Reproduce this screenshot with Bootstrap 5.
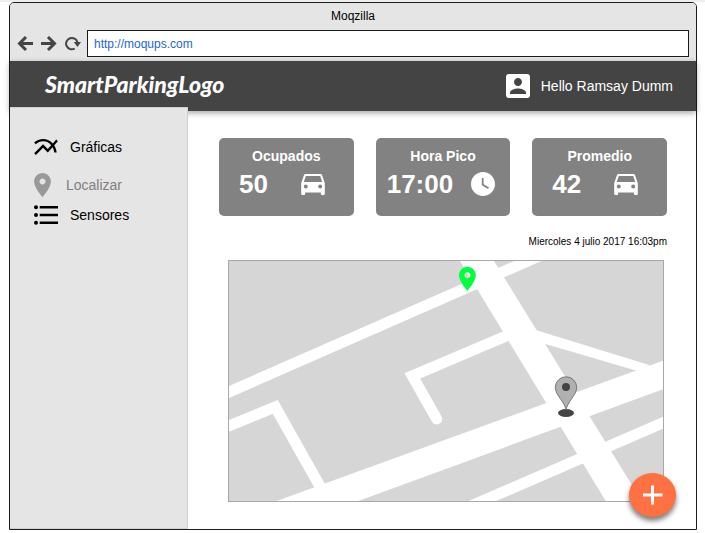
<!DOCTYPE html>
<html lang="es">
<head>
<meta charset="utf-8">
<meta name="viewport" content="width=device-width, initial-scale=1">
<title>Moqzilla</title>
<link href="https://cdn.jsdelivr.net/npm/bootstrap@5.3.0/dist/css/bootstrap.min.css" rel="stylesheet">
<style>
body { font-family: "Liberation Sans", Arial, sans-serif; font-size: 14px; line-height: 18px; color: #000; background: #fff; border-top: 2px solid #eee; }
svg { display: block; flex: none; }
.browser { margin: 0 8px 0 9px; border: 1px solid #1c1c1c; border-radius: 5px 5px 0 0; }
.chrome { background: #e5e5e5; border-radius: 4px 4px 0 0; padding: 4px 7px; }
.chrome-title { font-size: 12px; margin-bottom: 5px; }
.chrome-buttons { gap: 7px; margin-right: 6px; }
.chrome-btn { border: 0; background: none; padding: 0; color: #444; }
.address { height: 27px; border: 1px solid #1c1c1c; background: #fff; color: #1a66dd; font-size: 12px; padding: 0 6px; min-width: 0; }
.topbar { background: #444; color: #fff; min-height: 50px; padding: 0 23px 0 35px; box-shadow: 0 2px 6px rgba(0,0,0,.35); }
.logo { font-family: Lato, "Liberation Sans", sans-serif; font-weight: 900; font-style: italic; font-size: 23px; line-height: 26px; padding-bottom: 4px; color: #fff; text-decoration: none; }
.user { gap: 11px; }
.side { width: 178px; flex: none; margin-top: -4px; background: #e5e5e5; border: solid #d0d0d0; border-width: 1px 1px 1px 0; padding: 24px 0 0 24px; }
.side a { height: 30px; gap: 12px; color: #000; text-decoration: none; }
.side a.current { gap: 15px; margin-top: 8px; color: #808080; }
.side a.current svg { color: #999; }
.content { padding: 27px 29px 27px 31px; min-width: 0; }
.stats { gap: 22px; }
.stat { flex: 1 1 0; background: #828282; color: #fff; border-radius: 5px; padding: 9px 0 13px; }
.stat h2 { font-size: 14px; line-height: 18px; font-weight: 700; margin: 0; text-align: center; }
.stat-body { font-size: 26px; line-height: 38px; font-weight: 700; padding: 0 29px 0 20px; }
.stat-body.wide { padding: 0 15px 0 11px; }
.stamp { font-size: 10px; line-height: 16px; margin: 18px 0 10px; text-align: right; }
.map-box { margin: 0 3px 0 9px; border: 1px solid #a8a8a8; background: #d6d6d6; }
.map-box > svg { width: 100%; height: auto; }
.fab { right: -13px; bottom: -16px; width: 47px; height: 44px; border: 0; border-radius: 50%; background: #ff7143; box-shadow: 0 4px 5px rgba(0,0,0,.5); padding: 0; }
</style>
</head>
<body>
<svg width="0" height="0" class="position-absolute" aria-hidden="true">
  <symbol id="car" viewBox="3 5 18 16"><path d="M18.92 6.01C18.72 5.42 18.16 5 17.5 5h-11c-.66 0-1.21.42-1.42 1.01L3 12v8c0 .55.45 1 1 1h1c.55 0 1-.45 1-1v-1h12v1c0 .55.45 1 1 1h1c.55 0 1-.45 1-1v-8l-2.08-5.99zM6.5 16c-.83 0-1.5-.67-1.5-1.5S5.67 13 6.5 13s1.5.67 1.5 1.5S7.33 16 6.5 16zm11 0c-.83 0-1.5-.67-1.5-1.5s.67-1.5 1.5-1.5 1.5.67 1.5 1.5-.67 1.5-1.5 1.5zM5 11l1.5-4.5h11L19 11H5z"/></symbol>
</svg>
<div class="browser">
  <div class="chrome">
    <div class="chrome-title text-center">Moqzilla</div>
    <div class="d-flex align-items-center">
      <div class="chrome-buttons d-flex align-items-center">
        <button class="chrome-btn" type="button" aria-label="Atrás"><svg width="17" height="16" viewBox="0 0 17 16" fill="none" stroke="currentColor" stroke-width="3"><path d="M16 7.500H3M9 1L2.500 7.500L9 14"/></svg></button>
        <button class="chrome-btn" type="button" aria-label="Adelante"><svg width="17" height="16" viewBox="0 0 17 16" fill="none" stroke="currentColor" stroke-width="3"><path d="M0 7.500H13M7 1L13.500 7.500L7 14"/></svg></button>
        <button class="chrome-btn" type="button" aria-label="Recargar"><svg width="16" height="16" viewBox="0 0 16 16"><path d="M9.800 12.500A5.700 5.700 0 1 1 12.400 6.500" fill="none" stroke="currentColor" stroke-width="2"/><path d="M8.800 6H16L12.500 11Z" fill="currentColor"/></svg></button>
      </div>
      <input class="address flex-fill" type="text" value="http://moqups.com" aria-label="Dirección">
    </div>
  </div>
  <header class="topbar d-flex align-items-center justify-content-between position-relative">
    <a class="logo" href="#">SmartParkingLogo</a>
    <div class="user d-flex align-items-center">
      <svg width="24" height="24" viewBox="3 3 18 18" fill="#fff"><path d="M3 5v14c0 1.100.89 2 2 2h14c1.100 0 2-.9 2-2V5c0-1.100-.9-2-2-2H5c-1.110 0-2 .9-2 2zm12 4c0 1.660-1.340 3-3 3s-3-1.340-3-3 1.340-3 3-3 3 1.340 3 3zm-9 8c0-2 4-3.100 6-3.100s6 1.100 6 3.100v1H6v-1z"/></svg>
      <span>Hello Ramsay Dumm</span>
    </div>
  </header>
  <div class="d-flex">
    <nav class="side position-relative" aria-label="Principal">
      <a class="d-flex align-items-center" href="#"><svg width="24" height="16" viewBox="2 5 20 13.500"><path d="M22 6.920l-1.410-1.410-2.850 3.210C15.680 6.400 12.830 5 9.610 5 6.720 5 4.070 6.160 2 8l1.420 1.420C5.120 7.930 7.270 7 9.610 7c2.740 0 5.090 1.260 6.770 3.240l-2.880 3.240-4-4L2 16.990l1.500 1.500 6-6.010 4 4 4.050-4.550c.75 1.350 1.250 2.900 1.440 4.550H21c-.22-2.300-.95-4.390-2.040-6.140L22 6.920z"/></svg>Gráficas</a>
      <a class="current d-flex align-items-center" href="#" aria-current="page"><svg width="17" height="24" viewBox="5 2 14 20" fill="currentColor"><path id="pin" d="M12 2C8.130 2 5 5.130 5 9c0 5.250 7 13 7 13s7-7.750 7-13c0-3.870-3.130-7-7-7zm0 9.500c-1.380 0-2.500-1.120-2.500-2.500s1.120-2.500 2.500-2.500 2.500 1.120 2.500 2.500-1.120 2.500-2.500 2.500z"/></svg>Localizar</a>
      <a class="d-flex align-items-center" href="#"><svg width="24" height="20" viewBox="0 0 24 20"><circle cx="2" cy="2.300" r="2"/><circle cx="2" cy="10" r="2"/><circle cx="2" cy="17.700" r="2"/><path d="M5.700 1.100H24v2.400H5.700zM5.700 8.800H24v2.400H5.700zM5.700 16.500H24v2.400H5.700z"/></svg>Sensores</a>
    </nav>
    <main class="content flex-fill">
      <div class="stats d-flex">
        <section class="stat">
          <h2>Ocupados</h2>
          <div class="stat-body d-flex align-items-center justify-content-between">50<svg width="24" height="21" fill="#fff"><use href="#car"/></svg></div>
        </section>
        <section class="stat">
          <h2>Hora Pico</h2>
          <div class="stat-body wide d-flex align-items-center justify-content-between">17:00<svg width="24" height="24" viewBox="2 2 20 20" fill="#fff"><path d="M12 2C6.500 2 2 6.500 2 12s4.500 10 10 10 10-4.500 10-10S17.500 2 12 2zm4.200 14.200L11 13V7h1.500v5.200l4.500 2.700-.8 1.300z"/></svg></div>
        </section>
        <section class="stat">
          <h2>Promedio</h2>
          <div class="stat-body d-flex align-items-center justify-content-between">42<svg width="24" height="21" fill="#fff"><use href="#car"/></svg></div>
        </section>
      </div>
      <p class="stamp">Miercoles 4 julio 2017 16:03pm</p>
      <div class="map-box position-relative">
        <svg viewBox="0 0 434 240" role="img" aria-label="Mapa">
          <g fill="none" stroke="#fff" stroke-width="11">
            <path d="M-20 139.800L330 -13.700"/>
            <path d="M-20 173L46.300 146L97 236"/>
            <path d="M276 75.500L183.300 115L207.700 158" stroke-linecap="round"/>
            <path d="M230 250.200L450 154.800"/>
          </g>
          <g fill="#fff">
            <path d="M47.700 240L434 99.700V128.300L129.300 240Z"/>
            <path d="M231 0H265L412.700 240H376.700Z"/>
            <path d="M305 68.500L421 104.300L407.700 109.700L313 82Z"/>
          </g>
          <use href="#pin" fill="#00ff40" transform="translate(224 3.400) scale(1.200)"/>
          <ellipse cx="337" cy="152" rx="8" ry="4" fill="#444"/>
          <path d="M337 149C336 141 326.300 134 326.300 126.500A10.700 10.700 0 0 1 347.700 126.500C347.700 134 338 141 337 149Z" fill="#b0b0b0" stroke="#777"/>
          <circle cx="337" cy="126" r="4" fill="#444"/>
        </svg>
        <button class="fab position-absolute d-flex align-items-center justify-content-center" type="button" aria-label="Agregar"><svg width="20" height="20" viewBox="0 0 20 20" stroke="#fff" stroke-width="3"><path d="M9.500 0.500V19.500M0 10H19.500"/></svg></button>
      </div>
    </main>
  </div>
</div>
<script src="https://cdn.jsdelivr.net/npm/bootstrap@5.3.0/dist/js/bootstrap.bundle.min.js"></script>
</body>
</html>
